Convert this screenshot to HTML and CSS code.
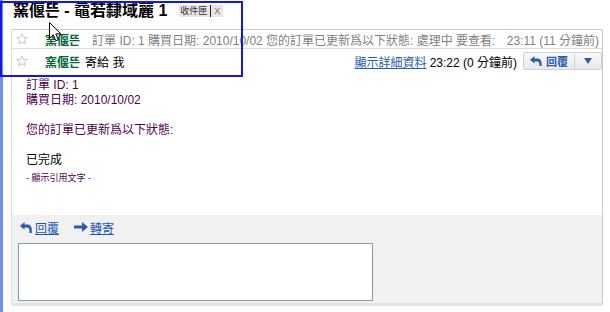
FILE: index.html
```html
<!DOCTYPE html>
<html>
<head>
<meta charset="utf-8">
<link rel="stylesheet" href="styles.css">
</head>
<body>
<div class="page">
  <div class="title-row">
    <h1 class="subject">窯偃뜬 - 黿若隸域麗 1</h1>
    <span class="label"><span class="label-name">收件匣</span><span class="label-x">X</span></span>
  </div>
  <div class="thread">
    <div class="row collapsed">
      <svg class="star" viewBox="0 0 12 12" width="12" height="12"><path d="M6 .8 7.5 4.2 11.2 4.5 8.4 7 9.3 10.8 6 8.8 2.7 10.8 3.6 7 .8 4.5 4.5 4.2Z" fill="none" stroke="#c8c8c8" stroke-width="1"/></svg>
      <span class="sender">窯偃뜬</span>
      <span class="snippet">訂單 ID: 1 購買日期: 2010/10/02 您的訂單已更新爲以下狀態: 處理中 要查看:</span>
      <span class="time grey">23:11 (11 分鐘前)</span>
    </div>
    <div class="row header">
      <svg class="star" viewBox="0 0 12 12" width="12" height="12"><path d="M6 .8 7.5 4.2 11.2 4.5 8.4 7 9.3 10.8 6 8.8 2.7 10.8 3.6 7 .8 4.5 4.5 4.2Z" fill="none" stroke="#c8c8c8" stroke-width="1"/></svg>
      <span class="sender">窯偃뜬</span>
      <span class="to">寄給 我</span>
      <a class="details" href="#">顯示詳細資料</a>
      <span class="time">23:22 (0 分鐘前)</span>
      <span class="btn-group">
        <span class="btn reply-btn"><svg viewBox="0 0 12 10" width="12" height="10"><path d="M4.5 0 0 3.8 4.5 7.6V5.4H7.2C8.6 5.4 9.4 6.3 9.4 7.8V10H11.6V7.4C11.6 4.6 10 2.6 7.3 2.6H4.5Z" fill="#2a5db0"/></svg>回覆</span>
        <span class="btn drop-btn"><svg viewBox="0 0 8 6" width="8" height="6"><path d="M0 0H8L4 6Z" fill="#2a5db0"/></svg></span>
      </span>
    </div>
    <div class="body">
      <div class="purple">訂單 ID: 1</div>
      <div class="purple">購買日期: 2010/10/02</div>
      <div class="blank"></div>
      <div class="purple">您的訂單已更新爲以下狀態:</div>
      <div class="blank"></div>
      <div>已完成</div>
      <div class="quoted">- 顯示引用文字 -</div>
    </div>
    <div class="reply-area">
      <div class="reply-links">
        <svg class="icon-reply" viewBox="0 0 12 12" width="12" height="12"><path d="M4.6 1 0 4.9 4.6 8.8V6.4H7C8.5 6.4 9.4 7.3 9.4 8.9V12H11.8V8.5C11.8 5.6 10 3.5 7.2 3.5H4.6Z" fill="#2a5db0"/></svg>
        <a href="#">回覆</a>
        <svg class="icon-fwd" viewBox="0 0 14 10" width="14" height="10"><path d="M0 3.6H8V0L14 5 8 10V6.4H0Z" fill="#2a5db0"/></svg>
        <a href="#">轉寄</a>
      </div>
      <div class="reply-box"></div>
    </div>
  </div>
  <div class="annot"></div>
  <svg class="cursor" viewBox="0 0 13 21" width="13" height="21"><path d="M.5 .5V16.5L4.3 12.8 6.8 18.8 9.3 17.7 6.8 11.9H12Z" fill="#fff" stroke="#000" stroke-width="1" stroke-linejoin="round"/></svg>
</div>
</body>
</html>
```
FILE: styles.css
```css
* { box-sizing: border-box; }
html, body { margin: 0; padding: 0; background: #fff; }
body {
  width: 610px;
  height: 312px;
  overflow: hidden;
  font-family: "Liberation Sans", "Noto Sans CJK TC", sans-serif;
  font-size: 12px;
  color: #000;
}
.page {
  position: relative;
  height: 312px;
  border-left: 3px solid #6d93e6;
  padding: 0 7px 0 8px;
}
.title-row {
  display: flex;
  align-items: flex-start;
  height: 29px;
  padding-left: 2px;
}
.subject {
  margin: 0;
  padding-top: 1px;
  font-size: 16px;
  line-height: 20px;
  font-weight: bold;
  white-space: nowrap;
}
.label {
  display: flex;
  align-items: center;
  margin: 5px 0 0 12px;
  height: 12px;
  background: #e6e6e6;
  font-size: 9px;
  line-height: 12px;
  color: #333;
}
.label-name { padding: 0 3px 0 1px; border-right: 1px solid #222; }
.label-x { padding: 0 3px; color: #777; }

.thread {
  border: 1px solid #c9c9c9;
  border-left-color: #dedede;
  border-bottom: 3px solid #e4e4e4;
  border-radius: 3px 3px 2px 2px;
}
.row {
  display: flex;
  align-items: center;
  white-space: nowrap;
  border-bottom: 1px solid #dcdcdc;
}
.collapsed { height: 19px; padding-right: 3px; }
.header { height: 24px; border-bottom: none; padding-right: 0; }
.star { margin-left: 4px; flex: none; }
.sender { margin-left: 17px; color: #006633; font-weight: bold; }
.snippet { margin-left: 12px; color: #808080; flex: 1; overflow: hidden; }
.time { margin-left: 3px; }
.grey { color: #808080; }
.to { margin-left: 5px; }
.details { margin-left: auto; color: #2a5db0; text-decoration: underline; }
.btn-group { display: flex; margin-left: 6px; height: 18px; }
.btn {
  display: flex;
  align-items: center;
  justify-content: center;
  background: linear-gradient(#f9f9f9, #e9e9e9);
  border: 1px solid #d0d0d0;
  color: #2a5db0;
  font-size: 11px;
  font-weight: bold;
}
.reply-btn { width: 52px; border-radius: 2px 0 0 2px; gap: 4px; }
.drop-btn { width: 27px; border-left: none; border-radius: 0 2px 2px 0; }

.body {
  padding: 5px 0 30px 14px;
  line-height: 15px;
}
.purple { color: #500050; }
.blank { height: 15px; }
.quoted { margin-top: 3px; font-size: 9px; line-height: 14px; color: #500050; }

.reply-area {
  background: #f1f1f1;
  padding: 2px 0 2px 6px;
}
.reply-links {
  display: flex;
  align-items: center;
  height: 20px;
  padding-left: 2px;
}
.reply-links a { color: #2255bb; text-decoration: underline; }
.icon-reply { margin-right: 3px; }
.icon-fwd { margin: 0 2px 0 15px; }
.reply-box {
  margin-top: 6px;
  width: 355px;
  height: 58px;
  background: #fff;
  border: 1px solid #7f9db9;
}

.annot {
  position: absolute;
  left: -3px;
  top: 1px;
  width: 243px;
  height: 76px;
  border: 2px solid #1414f0;
}
.cursor {
  position: absolute;
  left: 46px;
  top: 22px;
}
```
